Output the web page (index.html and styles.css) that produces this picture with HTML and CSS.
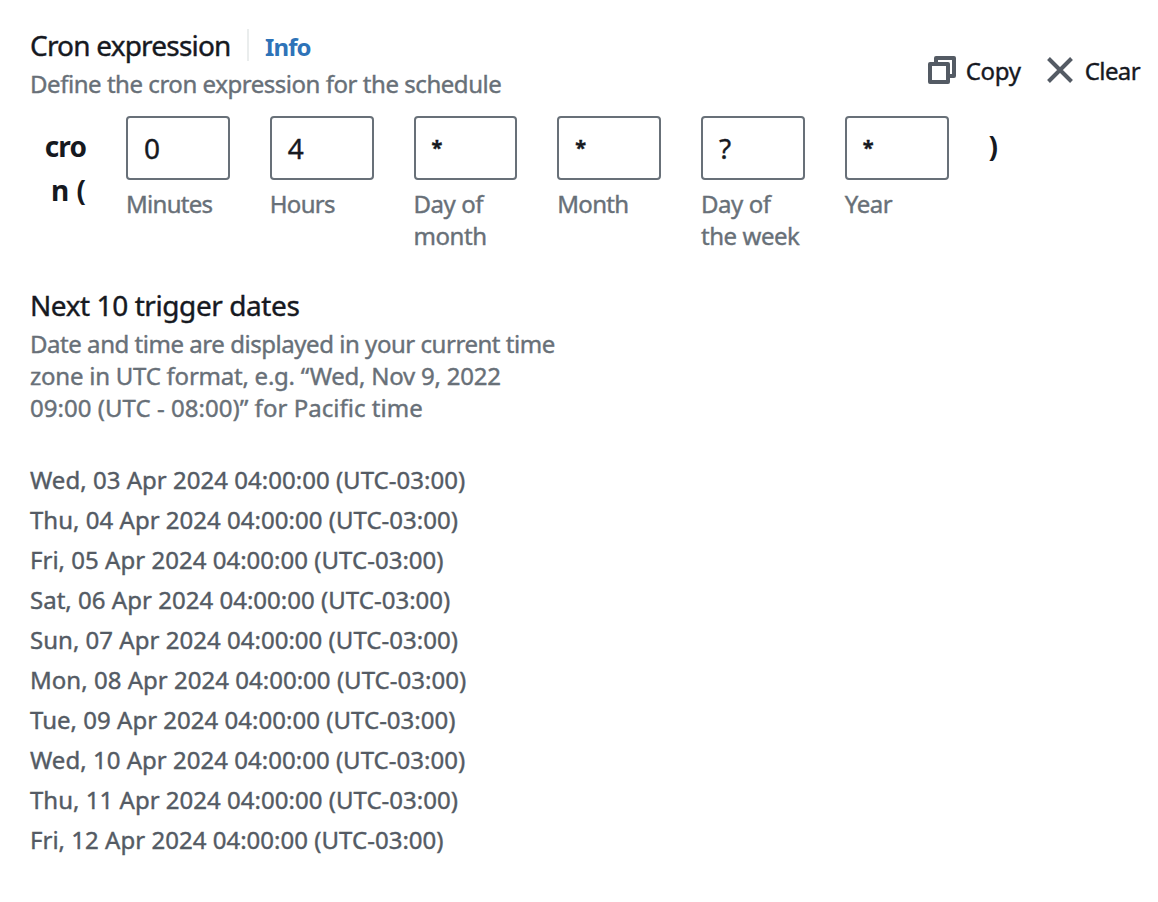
FILE: index.html
```html
<!DOCTYPE html>
<html lang="en">
<head>
<meta charset="utf-8">
<title>Cron expression</title>
<link rel="stylesheet" href="styles.css">
</head>
<body>
<main class="page">
  <header class="header">
    <div>
      <div class="title-row">
        <h2 class="title title-cron">Cron expression</h2>
        <a class="info">Info</a>
      </div>
      <p class="hint">Define the cron expression for the schedule</p>
    </div>
    <div class="actions">
      <button class="action copy"><svg class="icon" viewBox="0 0 28 28"><path d="M2 8h18v18H2zM8 8V2h18v18h-6"/></svg><span>Copy</span></button>
      <button class="action clear"><svg class="icon" viewBox="0 0 28 28"><path d="M2.5 2.5l23 23M25.5 2.5l-23 23"/></svg><span>Clear</span></button>
    </div>
  </header>

  <section class="cron">
    <div class="paren open">cro<br><span class="wide">n (</span></div>
    <div class="field"><div class="box">0</div><div class="label">Minutes</div></div>
    <div class="field"><div class="box">4</div><div class="label">Hours</div></div>
    <div class="field"><div class="box"><span class="star">*</span></div><div class="label loose">Day of<br>month</div></div>
    <div class="field"><div class="box"><span class="star">*</span></div><div class="label">Month</div></div>
    <div class="field"><div class="box">?</div><div class="label loose">Day of<br>the week</div></div>
    <div class="field"><div class="box"><span class="star">*</span></div><div class="label loose">Year</div></div>
    <div class="paren close">)</div>
  </section>

  <section class="next">
    <h2 class="title title-next">Next 10 trigger dates</h2>
    <p class="hint"><span>Date and time are displayed in your current time</span><br><span class="line-zone">zone in UTC format, e.g. “Wed, Nov 9, 2022</span><br><span class="line-example">09:00 (UTC - 08:00)” for Pacific time</span></p>
    <ul class="dates">
      <li>Wed, 03 Apr 2024 04:00:00 (UTC-03:00)</li>
      <li>Thu, 04 Apr 2024 04:00:00 (UTC-03:00)</li>
      <li>Fri, 05 Apr 2024 04:00:00 (UTC-03:00)</li>
      <li>Sat, 06 Apr 2024 04:00:00 (UTC-03:00)</li>
      <li>Sun, 07 Apr 2024 04:00:00 (UTC-03:00)</li>
      <li>Mon, 08 Apr 2024 04:00:00 (UTC-03:00)</li>
      <li>Tue, 09 Apr 2024 04:00:00 (UTC-03:00)</li>
      <li>Wed, 10 Apr 2024 04:00:00 (UTC-03:00)</li>
      <li>Thu, 11 Apr 2024 04:00:00 (UTC-03:00)</li>
      <li>Fri, 12 Apr 2024 04:00:00 (UTC-03:00)</li>
    </ul>
  </section>
</main>
</body>
</html>
```
FILE: styles.css
```css
* { box-sizing: border-box; margin: 0; padding: 0; }
body {
  background: #fff;
  color: #16191f;
  font: 400 24px/32px "Noto Sans", sans-serif;
  -webkit-text-stroke-width: 0.4px;
}
.page { padding: 27px 18px 0 30px; }
.header { display: flex; justify-content: space-between; }
.title-row { display: flex; height: 41px; }
.title { font-size: 28px; font-weight: 400; line-height: 36px; white-space: nowrap; }
.title-cron { width: 217px; letter-spacing: -0.8px; }
.title-next { letter-spacing: -0.42px; }
.info {
  height: 32px;
  margin-top: 2px;
  padding-left: 16px;
  border-left: 2px solid #eaeded;
  color: #2e73b8;
  font-weight: 700;
  line-height: 36px;
  letter-spacing: -0.9px;
  -webkit-text-stroke-width: 0;
}
.hint { color: #687078; letter-spacing: -0.46px; white-space: nowrap; }
.line-zone { letter-spacing: -0.24px; }
.line-example { letter-spacing: 0.03px; }
.actions { display: flex; gap: 25px; padding-top: 29px; }
.action {
  display: flex;
  align-items: flex-start;
  height: 32px;
  border: 0;
  background: none;
  color: #16191f;
  font: inherit;
  line-height: 30px;
}
.copy { gap: 10px; letter-spacing: -0.3px; }
.clear { gap: 11px; letter-spacing: -0.6px; }
.icon { width: 28px; height: 28px; fill: none; stroke: #545b64; stroke-width: 4; stroke-linejoin: round; }
.cron { display: flex; gap: 40px; padding-top: 16px; height: 187px; }
.paren {
  padding-top: 8px;
  font-size: 28px;
  font-weight: 700;
  line-height: 44px;
  -webkit-text-stroke-width: 0;
}
.open { width: 56px; text-align: right; letter-spacing: -0.9px; }
.wide { letter-spacing: 0; }
.field { width: 103.75px; }
.box {
  height: 64px;
  padding-left: 16px;
  border: 2px solid #687078;
  border-radius: 4px;
  font-size: 28px;
  line-height: 61px;
}
.star { display: block; font-size: 20px; font-weight: 700; line-height: 60px; }
.label { margin-top: 8px; color: #687078; letter-spacing: -0.7px; white-space: nowrap; }
.loose { letter-spacing: -0.45px; }
.next .hint { margin-top: 5px; }
.dates { margin-top: 36px; color: #545b64; line-height: 40px; list-style: none; letter-spacing: 0.02px; }
```
